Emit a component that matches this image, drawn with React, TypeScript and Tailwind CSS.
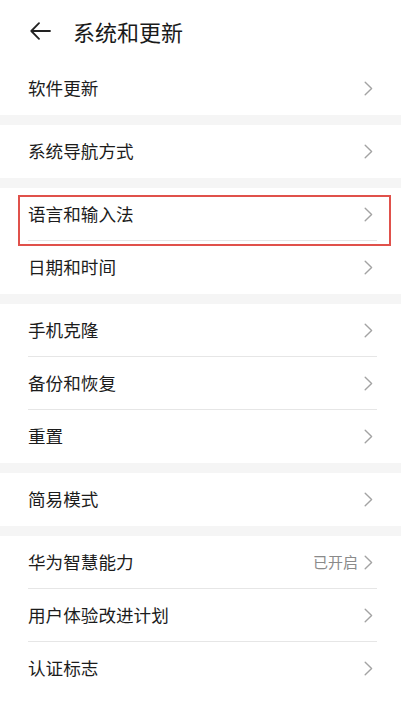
import React from "react";

type Item = { label: string; value?: string };

const groups: Item[][] = [
    [{ label: "软件更新" }],
    [{ label: "系统导航方式" }],
    [{ label: "语言和输入法" }, { label: "日期和时间" }],
    [{ label: "手机克隆" }, { label: "备份和恢复" }, { label: "重置" }],
    [{ label: "简易模式" }],
    [{ label: "华为智慧能力", value: "已开启" }, { label: "用户体验改进计划" }, { label: "认证标志" }],
];

function Chevron() {
    return (
        <svg width="9" height="15" viewBox="0 0 9 15" fill="none" className="shrink-0">
            <path d="M1.2 1.2 L7.6 7.5 L1.2 13.8" stroke="#a3a3a3" strokeWidth="1.4" strokeLinecap="round" strokeLinejoin="round" />
        </svg>
    );
}

function Row({ item, last }: { item: Item; last: boolean }) {
    return (
        <div className="h-[53px] pl-[28px] pr-[24px]">
            <div className={`flex h-full items-center ${last ? "" : "border-b border-[#e6e6e6]"}`}>
                <span className="flex-1 text-[17.6px] text-[#1c1c1c]">{item.label}</span>
                {item.value && <span className="mr-[6px] text-[15px] text-[#8a8a8a]">{item.value}</span>}
                <div className="mr-[4px]">
                    <Chevron />
                </div>
            </div>
        </div>
    );
}

export default function App() {
    return (
        <div className="w-[401px] min-h-[710px] bg-white font-['Noto_Sans_CJK_SC',sans-serif]">
            <div className="flex h-[62px] items-center pl-[30px]">
                <svg width="21" height="18" viewBox="0 0 21 18" fill="none">
                    <path d="M20 9 H1.5 M9 1.2 L1.3 9 L9 16.8" stroke="#222" strokeWidth="1.8" strokeLinecap="round" strokeLinejoin="round" />
                </svg>
                <span className="ml-[22px] text-[22px] text-[#1a1a1a]">系统和更新</span>
            </div>
            {groups.map((g, gi) => (
                <div key={gi}>
                    {gi > 0 && <div className="h-[10px] bg-[#f5f5f5]" />}
                    <div className="relative">
                        {g.map((item, i) => (
                            <Row key={item.label} item={item} last={i === g.length - 1} />
                        ))}
                        {gi === 2 && (
                            <div className="absolute left-[18px] top-[7px] h-[51px] w-[373px] border-2 border-[#e0514b]" />
                        )}
                    </div>
                </div>
            ))}
        </div>
    );
}
